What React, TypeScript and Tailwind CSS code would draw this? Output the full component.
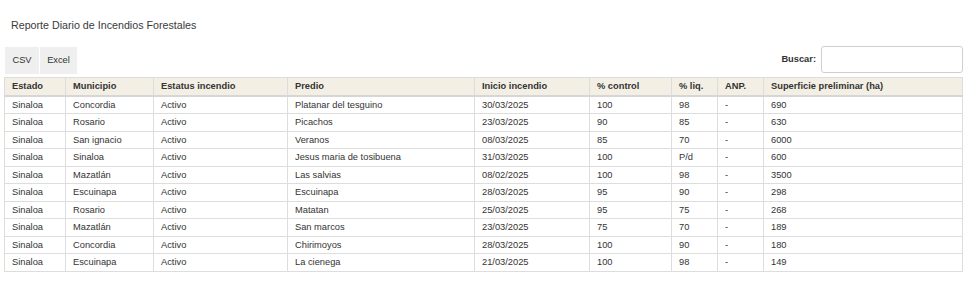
import React from "react";

const rows: string[][] = [
  ["Sinaloa", "Concordia", "Activo", "Platanar del tesguino", "30/03/2025", "100", "98", "-", "690"],
  ["Sinaloa", "Rosario", "Activo", "Picachos", "23/03/2025", "90", "85", "-", "630"],
  ["Sinaloa", "San ignacio", "Activo", "Veranos", "08/03/2025", "85", "70", "-", "6000"],
  ["Sinaloa", "Sinaloa", "Activo", "Jesus maria de tosibuena", "31/03/2025", "100", "P/d", "-", "600"],
  ["Sinaloa", "Mazatlán", "Activo", "Las salvias", "08/02/2025", "100", "98", "-", "3500"],
  ["Sinaloa", "Escuinapa", "Activo", "Escuinapa", "28/03/2025", "95", "90", "-", "298"],
  ["Sinaloa", "Rosario", "Activo", "Matatan", "25/03/2025", "95", "75", "-", "268"],
  ["Sinaloa", "Mazatlán", "Activo", "San marcos", "23/03/2025", "75", "70", "-", "189"],
  ["Sinaloa", "Concordia", "Activo", "Chirimoyos", "28/03/2025", "100", "90", "-", "180"],
  ["Sinaloa", "Escuinapa", "Activo", "La cienega", "21/03/2025", "100", "98", "-", "149"],
];

const headers = [
  "Estado",
  "Municipio",
  "Estatus incendio",
  "Predio",
  "Inicio incendio",
  "% control",
  "% liq.",
  "ANP.",
  "Superficie preliminar (ha)",
];

const widths = [61, 88, 134, 187, 115, 82, 46, 46, 199];

export default function App() {
  return (
    <div
      className="w-[967px] h-[286px] bg-white text-[#333] px-[4px]"
      style={{ fontFamily: '"Liberation Sans", Arial, sans-serif' }}
    >
      <div className="pt-[18px] pl-[7px] text-[10.7px] leading-[14px] h-[46px] text-[#3a3a3a]">
        Reporte Diario de Incendios Forestales
      </div>
      <div className="flex items-start justify-between h-[31px]">
        <div className="flex gap-[1px] pt-[1px] pl-[1px]">
          <div className="w-[34px] h-[27px] bg-[#efefef] flex items-center justify-center text-[9.3px] text-[#333]">
            CSV
          </div>
          <div className="w-[37px] h-[27px] bg-[#efefef] flex items-center justify-center text-[9.3px] text-[#333]">
            Excel
          </div>
        </div>
        <div className="flex items-center gap-[5px]">
          <span className="text-[9.3px] font-bold text-[#333]">Buscar:</span>
          <div className="w-[142px] h-[27px] border border-[#cfcfcf] rounded-[3px] bg-white" />
        </div>
      </div>
      <table className="table-fixed border-collapse w-[958px] text-[9.3px]">
        <colgroup>
          {widths.map((w, i) => (
            <col key={i} style={{ width: w }} />
          ))}
        </colgroup>
        <thead>
          <tr className="bg-[#f3efe5]">
            {headers.map((h) => (
              <th
                key={h}
                className="border border-[#dddddd] border-b-2 border-b-[#d6d6d6] text-left font-bold pl-[7px] py-0 h-[18px] leading-[13px] text-[#333]"
              >
                {h}
              </th>
            ))}
          </tr>
        </thead>
        <tbody>
          {rows.map((r, i) => (
            <tr key={i}>
              {r.map((c, j) => (
                <td
                  key={j}
                  className="border border-[#dddddd] pl-[7px] py-[2px] leading-[12.5px] text-[#333] whitespace-nowrap overflow-hidden"
                >
                  {c}
                </td>
              ))}
            </tr>
          ))}
        </tbody>
      </table>
    </div>
  );
}
